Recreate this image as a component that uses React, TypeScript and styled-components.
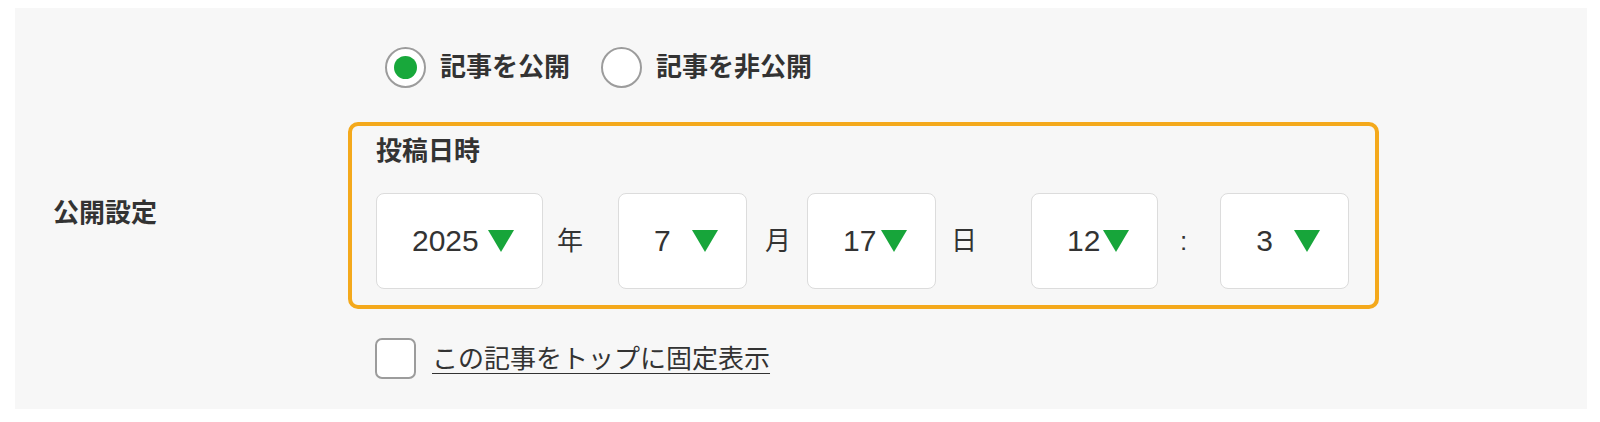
import * as React from 'react';
import styled, { createGlobalStyle } from 'styled-components';

const GlobalStyle = createGlobalStyle`
  html, body {
    margin: 0;
    background: #fff;
  }

  body {
    color: #333;
    font-family: 'Liberation Sans', 'Noto Sans CJK JP', sans-serif;
  }
`;

const Page = styled.div`
  padding: 8px 13px 13px 15px;
`;

const Panel = styled.section`
  align-items: center;
  background: #f7f7f7;
  display: flex;
  padding: 39px 0 30px 38px;
`;

const RowLabel = styled.div`
  font-size: 26px;
  font-weight: 700;
  line-height: 30px;
  width: 295px;
`;

const Fields = styled.div`
  align-items: flex-start;
  display: flex;
  flex-direction: column;
`;

const RadioRow = styled.div`
  align-items: center;
  display: flex;
  height: 40px;
  padding-left: 37px;
`;

const RadioOption = styled.label`
  align-items: center;
  cursor: pointer;
  display: flex;
  font-size: 26px;
  font-weight: 700;
  gap: 14px;
  line-height: 30px;
  margin-right: 31px;
`;

const RadioMark = styled.span<{ $checked?: boolean }>`
  align-items: center;
  background: #fff;
  border: 2px solid #9c9c9c;
  border-radius: 50%;
  box-sizing: border-box;
  display: flex;
  height: 41px;
  justify-content: center;
  width: 41px;

  &::after {
    background: #18a83b;
    border-radius: 50%;
    content: '';
    display: ${(props) => (props.$checked ? 'block' : 'none')};
    height: 23px;
    width: 23px;
  }
`;

const DateBox = styled.fieldset`
  border: 4px solid #f4a91c;
  border-radius: 10px;
  margin: 35px 0 29px;
  padding: 10px 26px 16px 24px;
`;

const DateTitle = styled.legend`
  float: left;
  font-size: 26px;
  font-weight: 700;
  line-height: 30px;
  margin-bottom: 27px;
  padding: 0;
  width: 100%;
`;

const DateRow = styled.div`
  align-items: center;
  clear: both;
  display: flex;
`;

const Select = styled.div<{ $width: number }>`
  align-items: center;
  background: #fff;
  border: 1px solid #dcdcdc;
  border-radius: 8px;
  box-sizing: border-box;
  display: flex;
  font-size: 30px;
  height: 96px;
  justify-content: space-between;
  padding: 0 28px 0 35px;
  width: ${(props) => props.$width}px;
`;

const Arrow = styled.span`
  border-left: 13.5px solid transparent;
  border-right: 13.5px solid transparent;
  border-top: 22px solid #17a53a;
  height: 0;
  width: 0;
`;

const Unit = styled.span<{ $before: number; $after: number }>`
  font-size: 26px;
  line-height: 30px;
  margin: 0 ${(props) => props.$after}px 0 ${(props) => props.$before}px;
`;

const CheckRow = styled.label`
  align-items: center;
  cursor: pointer;
  display: flex;
  gap: 16px;
  padding-left: 27px;
`;

const CheckMark = styled.span`
  background: #fff;
  border: 2px solid #9c9c9c;
  border-radius: 7px;
  box-sizing: border-box;
  height: 41px;
  width: 41px;
`;

const CheckText = styled.span`
  font-size: 26px;
  line-height: 30px;
  text-decoration: underline;
  text-decoration-thickness: 1px;
  text-underline-offset: 5px;
`;

const selects = [
  { value: '2025', width: 167, unit: '年', before: 14, after: 35 },
  { value: '7', width: 129, unit: '月', before: 18, after: 16 },
  { value: '17', width: 129, unit: '日', before: 15, after: 54 },
  { value: '12', width: 127, unit: ':', before: 22, after: 33 },
  { value: '3', width: 129 },
];

export default function App() {
  return (
    <Page>
      <GlobalStyle />
      <Panel>
        <RowLabel>公開設定</RowLabel>
        <Fields>
          <RadioRow>
            <RadioOption>
              <RadioMark $checked />
              記事を公開
            </RadioOption>
            <RadioOption>
              <RadioMark />
              記事を非公開
            </RadioOption>
          </RadioRow>
          <DateBox>
            <DateTitle>投稿日時</DateTitle>
            <DateRow>
              {selects.map((s) => (
                <React.Fragment key={s.value}>
                  <Select $width={s.width}>
                    <span>{s.value}</span>
                    <Arrow />
                  </Select>
                  {s.unit && (
                    <Unit $before={s.before!} $after={s.after!}>
                      {s.unit}
                    </Unit>
                  )}
                </React.Fragment>
              ))}
            </DateRow>
          </DateBox>
          <CheckRow>
            <CheckMark />
            <CheckText>この記事をトップに固定表示</CheckText>
          </CheckRow>
        </Fields>
      </Panel>
    </Page>
  );
}
